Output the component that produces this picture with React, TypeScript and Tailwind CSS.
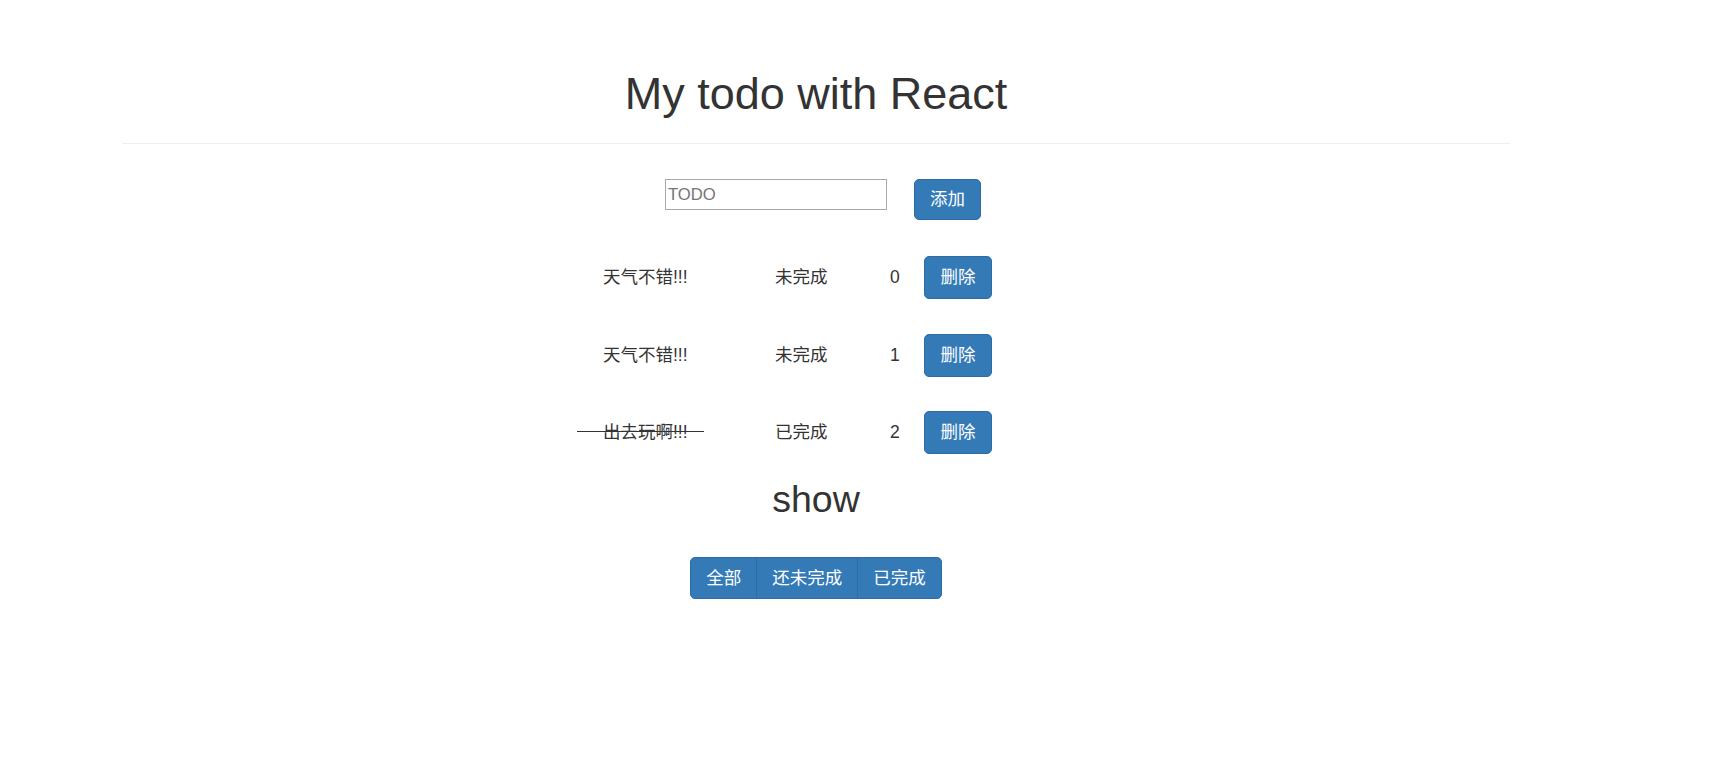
import React from "react";

const todos = [
  { text: "天气不错!!!", done: false },
  { text: "天气不错!!!", done: false },
  { text: "出去玩啊!!!", done: true },
];

export default function App() {
  return (
    <div className="min-h-[780px] w-full bg-white text-[#333] font-['Liberation_Sans','Noto_Sans_CJK_SC',sans-serif]">
      <div className="ml-[122px] w-[1388px]">
        <div className="pt-[69px] pb-[24.5px] border-b border-[#eee]">
          <h1 className="text-center text-[45px] leading-[49.5px] font-normal">My todo with React</h1>
        </div>

        <div className="mt-[35px] flex items-start justify-center gap-[27px] pl-[14px]">
          <input
            type="text"
            placeholder="TODO"
            className="w-[222px] h-[31px] border border-[#a9a9a9] px-[2px] text-[16.67px] text-[#333] outline-none placeholder:text-[#757575] font-['Liberation_Sans',sans-serif]"
          />
          <button className="w-[67px] h-[41px] rounded-[5px] border border-[#2e6da4] bg-[#337ab7] text-white text-[17.5px] flex items-center justify-center">
            添加
          </button>
        </div>

        <div className="mt-[36px] flex flex-col gap-[34.5px]">
          {todos.map((t, i) => (
            <div key={i} className="h-[43px] flex items-center pl-[455px] text-[17.5px]">
              <div className="w-[126px] pl-[26px] whitespace-nowrap">
                <span className="relative inline-block">
                  {t.text}
                  {t.done && (
                    <span className="absolute left-[-26px] right-[-16px] top-[calc(50%-2px)] h-px bg-[#333]" />
                  )}
                </span>
              </div>
              <div className="w-[187px] pl-[72px] whitespace-nowrap">{t.done ? "已完成" : "未完成"}</div>
              <div className="w-[34px]">{i}</div>
              <button className="w-[68px] h-[43px] rounded-[5px] border border-[#2e6da4] bg-[#337ab7] text-white text-[17.5px] flex items-center justify-center">
                删除
              </button>
            </div>
          ))}
        </div>

        <h2 className="mt-[25.4px] text-center text-[37.5px] leading-[41.25px] font-normal">show</h2>

        <div className="mt-[36px] flex justify-center">
          <button className="h-[42px] px-[15px] rounded-l-[5px] border border-[#2e6da4] bg-[#337ab7] text-white text-[17.5px]">全部</button>
          <button className="-ml-px h-[42px] px-[15px] border border-[#2e6da4] bg-[#337ab7] text-white text-[17.5px]">还未完成</button>
          <button className="-ml-px h-[42px] px-[15px] rounded-r-[5px] border border-[#2e6da4] bg-[#337ab7] text-white text-[17.5px]">已完成</button>
        </div>
      </div>
    </div>
  );
}
